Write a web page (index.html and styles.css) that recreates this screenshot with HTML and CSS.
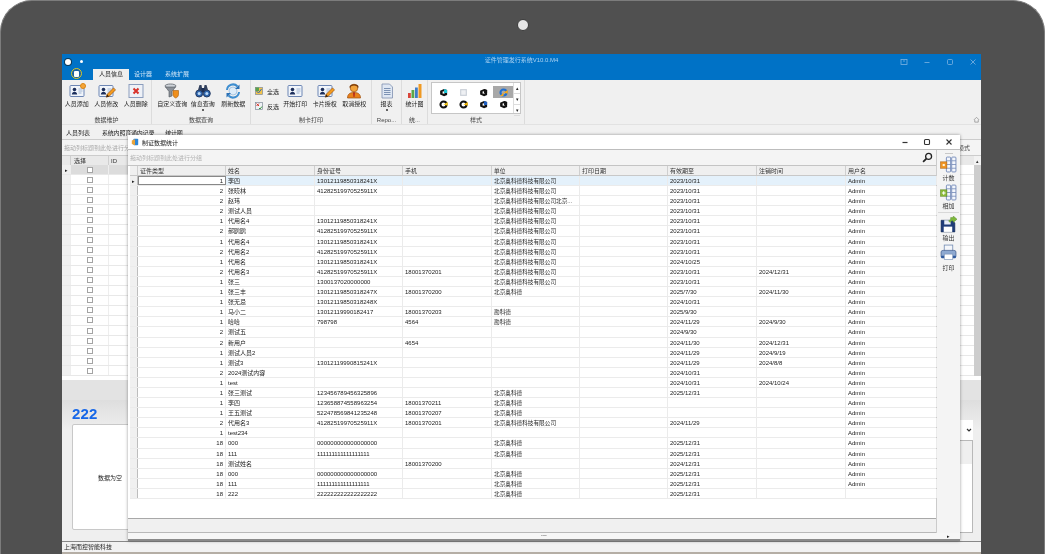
FILE: index.html
```html
<!DOCTYPE html>
<html lang="zh-CN">
<head>
<meta charset="utf-8">
<title>证件管理发行系统</title>
<link rel="stylesheet" href="styles.css">
</head>
<body>
<svg class="defs" width="0" height="0" aria-hidden="true">
  <defs>
    <symbol id="card" viewBox="0 0 16 16">
      <rect x="1" y="2.500" width="14" height="11" rx="1" fill="#f1f5fb" stroke="#6d86b4" stroke-width="1"/>
      <circle cx="5.500" cy="6.500" r="1.800" fill="#1d2f5c"/>
      <path d="M2.800 11.500c.2-2 1.300-2.800 2.700-2.800s2.500.8 2.700 2.800z" fill="#1d2f5c"/>
      <path d="M9.500 6h4M9.500 8h4M9.500 10h3" stroke="#8ea3c8" stroke-width=".8"/>
    </symbol>
    <symbol id="pencil" viewBox="0 0 16 16">
      <path d="M4 15l1-3.500 8-8 2.500 2.500-8 8z" fill="#f39a1f" stroke="#7a3d0c" stroke-width=".6"/>
      <path d="M4 15l1-3.500 2.500 2.500z" fill="#3a2410"/>
    </symbol>
    <symbol id="funnel" viewBox="0 0 16 16">
      <ellipse cx="6.500" cy="3" rx="5.500" ry="2" fill="#cfd4da" stroke="#5c626a" stroke-width=".8"/>
      <path d="M1.500 4l3.500 4.500V14l3-1V8.500L11.500 4z" fill="#8a9098" stroke="#4f555c" stroke-width=".6"/>
      <path d="M9 7.500h5.500v4c0 2-1.500 3-2.750 3.500C10.500 14.500 9 13.500 9 11.500z" fill="#ef8f1c" stroke="#a85a0a" stroke-width=".6"/>
    </symbol>
    <symbol id="binoculars" viewBox="0 0 16 16">
      <circle cx="4.200" cy="10.500" r="3.500" fill="#2f66ad" stroke="#1c2f55" stroke-width=".9"/>
      <circle cx="11.800" cy="10.500" r="3.500" fill="#2f66ad" stroke="#1c2f55" stroke-width=".9"/>
      <circle cx="4.200" cy="10.500" r="1.500" fill="#bcd8f5"/>
      <circle cx="11.800" cy="10.500" r="1.500" fill="#bcd8f5"/>
      <path d="M3 7l1.500-5h2L7.500 8M13 7l-1.500-5h-2L8.500 8" fill="#33415e"/>
      <rect x="6.500" y="5" width="3" height="4" fill="#1c2f55"/>
    </symbol>
    <symbol id="refresh" viewBox="0 0 16 16">
      <circle cx="8" cy="8" r="4" fill="#dcecf9" stroke="#8fb4d8" stroke-width=".7"/>
      <path d="M2 7A6 6 0 0 1 12.500 3.500" fill="none" stroke="#3e8ed0" stroke-width="2"/>
      <path d="M14 9A6 6 0 0 1 3.500 12.500" fill="none" stroke="#3e8ed0" stroke-width="2"/>
      <path d="M14.500 1.500v4.500h-4.500zM1.500 14.500V10h4.500z" fill="#2a70b5"/>
    </symbol>
    <symbol id="selall" viewBox="0 0 8 8">
      <rect x=".5" y=".5" width="7" height="7" fill="#f3c34b" stroke="#7f8b99" stroke-width=".7"/>
      <rect x=".5" y=".5" width="3.500" height="3.500" fill="#59a14f"/>
      <path d="M1.500 4l2 2 3-4" fill="none" stroke="#2c6bb3" stroke-width="1"/>
    </symbol>
    <symbol id="selinv" viewBox="0 0 8 8">
      <rect x=".5" y=".5" width="7" height="7" fill="#eef1f5" stroke="#7f8b99" stroke-width=".7"/>
      <path d="M1.500 1.500l2.500 2.500M4 1.500L1.500 4" stroke="#d8352a" stroke-width="1"/>
      <path d="M4 6l1 1 2-2.500" fill="none" stroke="#3c9a3c" stroke-width="1"/>
    </symbol>
    <symbol id="agent" viewBox="0 0 16 16">
      <circle cx="8" cy="5" r="3.800" fill="#f2a33a" stroke="#9c4f0c" stroke-width=".7"/>
      <path d="M4 4.500C4 1 12 1 12 4.500" fill="none" stroke="#7a3a0a" stroke-width="1.300"/>
      <path d="M1.500 15c0-4 2.500-5.500 6.500-5.500s6.500 1.500 6.500 5.500z" fill="#e8801c" stroke="#9c4f0c" stroke-width=".7"/>
      <path d="M7 9.500h2L8.500 14h-1z" fill="#b3261e"/>
    </symbol>
    <symbol id="report" viewBox="0 0 16 16">
      <path d="M3 1h7.500L13.500 4v11H3z" fill="#dfe7f3" stroke="#7d8fae" stroke-width=".8"/>
      <path d="M5 5.500h6.500M5 7.500h6.500M5 9.500h6.500M5 11.500h6.500" stroke="#7188ad" stroke-width=".9"/>
    </symbol>
    <symbol id="chart" viewBox="0 0 16 16">
      <rect x="1" y="10" width="2.800" height="5" fill="#d9453a"/>
      <rect x="4.500" y="7" width="2.800" height="8" fill="#5ba84a"/>
      <rect x="8" y="4.500" width="2.800" height="10.500" fill="#3f7dc9"/>
      <rect x="11.500" y="1" width="3" height="14" fill="#ef9a24"/>
    </symbol>
    <symbol id="colcount" viewBox="0 0 16 16">
      <rect x="6" y="1" width="4" height="14" rx=".8" fill="#f3f6fc" stroke="#6a82b4" stroke-width=".8"/>
      <rect x="11" y="1" width="4" height="14" rx=".8" fill="#f3f6fc" stroke="#6a82b4" stroke-width=".8"/>
      <path d="M6 4.500h4M6 8h4M6 11.500h4M11 4.500h4M11 8h4M11 11.500h4" stroke="#6a82b4" stroke-width=".7"/>
      <rect x=".5" y="5.500" width="6" height="6" fill="#ef9322" stroke="#a55e10" stroke-width=".5"/>
      <rect x="2.500" y="7.500" width="2" height="2" fill="#fff3d6"/>
    </symbol>
    <symbol id="coladd" viewBox="0 0 16 16">
      <rect x="6" y="1" width="4" height="14" rx=".8" fill="#f3f6fc" stroke="#6a82b4" stroke-width=".8"/>
      <rect x="11" y="1" width="4" height="14" rx=".8" fill="#f3f6fc" stroke="#6a82b4" stroke-width=".8"/>
      <path d="M6 4.500h4M6 8h4M6 11.500h4M11 4.500h4M11 8h4M11 11.500h4" stroke="#6a82b4" stroke-width=".7"/>
      <rect x=".5" y="5.500" width="6" height="6" fill="#8bbb3a" stroke="#55801a" stroke-width=".5"/>
      <path d="M3.500 6.800v3.400M1.800 8.500h3.400" stroke="#fff" stroke-width="1"/>
    </symbol>
    <symbol id="save" viewBox="0 0 16 16">
      <path d="M1 4h10.500L14 6.500V15H1z" fill="#1f3c78" stroke="#10234c" stroke-width=".5"/>
      <rect x="4" y="4" width="6" height="4" fill="#e9eef7"/>
      <rect x="3.500" y="10" width="8" height="5" fill="#fff"/>
      <path d="M8 4.500l2-1V1.500h2.500V0L16 3l-3.500 3V4.500H11L9.500 6z" fill="#7db93a" stroke="#4f8120" stroke-width=".4"/>
    </symbol>
    <symbol id="printer" viewBox="0 0 16 16">
      <rect x="4" y="1" width="8" height="6" fill="#f4f6fa" stroke="#7890b5" stroke-width=".8"/>
      <path d="M1 7.500Q1 6 3 6h10q2 0 2 1.500V12H1z" fill="#8ea9d1" stroke="#3f5c8d" stroke-width=".7"/>
      <rect x="1" y="11" width="14" height="2.500" rx="1" fill="#2f5a9e"/>
      <rect x="4" y="9.500" width="8" height="5" fill="#fff" stroke="#7890b5" stroke-width=".6"/>
    </symbol>
    <symbol id="tile" viewBox="0 0 8 8">
      <path d="M1 2.500L4.500.8 7.200 1.800V6.200L4.500 7.300 1 5.800z" fill="#111"/>
      <path d="M3.200 3h1.800v2H3.200z" fill="#fff"/>
      <path d="M4.500 .8L7.200 1.800V4.500H4.500z" fill="currentColor"/>
    </symbol>
    <symbol id="ring" viewBox="0 0 8 8">
      <circle cx="4" cy="4" r="2.700" fill="none" stroke="#111" stroke-width="1.800"/>
      <path d="M4 4L7.800 1.800V5.200z" fill="currentColor"/>
    </symbol>
    <symbol id="ringblue" viewBox="0 0 8 8">
      <circle cx="4" cy="4" r="2.700" fill="none" stroke="#1f6fd0" stroke-width="1.800"/>
      <path d="M4 4L7.800 1.800V5.200zM4 4L1 7h3z" fill="currentColor"/>
    </symbol>
    <symbol id="pale" viewBox="0 0 8 8">
      <rect x="1.500" y="1.500" width="5" height="5" fill="#eef0f3" stroke="#c9ced6" stroke-width="1"/>
    </symbol>
  </defs>
</svg>

<div class="frame">
  <div class="camera"></div>
  <div class="app">
    <header class="titlebar">
      <div class="title-top">
        <span class="qat"><i class="qat-big"></i><i class="qat-small"></i></span>
        <span class="app-title">证件管理发行系统V10.0.M4</span>
        <span class="win-btns">
          <svg class="wb" viewBox="0 0 8 8"><rect x="1" y="1.500" width="6" height="5" fill="none" stroke="#7eb4e2" stroke-width=".8"/><path d="M4 2v2" stroke="#7eb4e2" stroke-width=".8"/></svg>
          <svg class="wb" viewBox="0 0 8 8"><path d="M1.500 4.500h5" stroke="#7eb4e2" stroke-width=".8"/></svg>
          <svg class="wb" viewBox="0 0 8 8"><rect x="1.500" y="1.500" width="5" height="5" rx="1" fill="none" stroke="#7eb4e2" stroke-width=".8"/></svg>
          <svg class="wb" viewBox="0 0 8 8"><path d="M1.500 1.500l5 5M6.500 1.500l-5 5" stroke="#7eb4e2" stroke-width=".8"/></svg>
        </span>
      </div>
      <nav class="tabs">
        <span class="orb"><i></i></span>
        <span class="tab active">人员信息</span>
        <span class="tab t2">设计器</span>
        <span class="tab t3">系统扩展</span>
      </nav>
    </header>

    <section class="ribbon">
      <div class="group g1">
        <div class="tools">
          <div class="tool"><span class="ico"><svg><use href="#card"/></svg><i class="plus"></i></span><span>人员添加</span></div>
          <div class="tool"><span class="ico"><svg><use href="#card"/></svg><svg class="over"><use href="#pencil"/></svg></span><span>人员修改</span></div>
          <div class="tool"><span class="ico"><svg class="del" viewBox="0 0 16 16"><rect x="1" y="1.500" width="14" height="13" fill="#eef1f7" stroke="#8b9dbd"/><path d="M5.500 5.500l5 5M10.500 5.500l-5 5" stroke="#d8322a" stroke-width="2"/></svg></span><span>人员删除</span></div>
        </div>
        <div class="glabel">数据维护</div>
      </div>
      <div class="group g2">
        <div class="tools">
          <div class="tool"><span class="ico"><svg><use href="#funnel"/></svg></span><span>自定义查询</span></div>
          <div class="tool"><span class="ico"><svg><use href="#binoculars"/></svg></span><span>信息查询</span><i class="drop"></i></div>
          <div class="tool"><span class="ico"><svg><use href="#refresh"/></svg></span><span>刷新数据</span></div>
        </div>
        <div class="glabel">数据查询</div>
      </div>
      <div class="group g3">
        <div class="tools">
          <div class="smalls">
            <div class="small"><svg><use href="#selall"/></svg><span>全选</span></div>
            <div class="small"><svg><use href="#selinv"/></svg><span>反选</span></div>
          </div>
          <div class="tool"><span class="ico"><svg><use href="#card"/></svg></span><span>开始打印</span></div>
          <div class="tool"><span class="ico"><svg><use href="#card"/></svg><svg class="over"><use href="#pencil"/></svg></span><span>卡片授权</span></div>
          <div class="tool"><span class="ico"><svg><use href="#agent"/></svg></span><span>取消授权</span></div>
        </div>
        <div class="glabel">制卡打印</div>
      </div>
      <div class="group g4">
        <div class="tools">
          <div class="tool"><span class="ico"><svg><use href="#report"/></svg></span><span>报表</span><i class="drop"></i></div>
        </div>
        <div class="glabel">Repo...</div>
      </div>
      <div class="group g5">
        <div class="tools">
          <div class="tool"><span class="ico"><svg><use href="#chart"/></svg></span><span>统计图</span></div>
        </div>
        <div class="glabel">统...</div>
      </div>
      <div class="group g6">
        <div class="tools">
          <div class="gallery">
            <div class="swatches">
              <span class="sw"><svg class="c-cyan"><use href="#tile"/></svg></span>
              <span class="sw"><svg><use href="#pale"/></svg></span>
              <span class="sw"><svg class="c-black"><use href="#tile"/></svg></span>
              <span class="sw sel"><svg class="c-orange"><use href="#ringblue"/></svg></span>
              <span class="sw"><svg class="c-yellow"><use href="#ring"/></svg></span>
              <span class="sw"><svg class="c-gold"><use href="#ring"/></svg></span>
              <span class="sw"><svg class="c-navy"><use href="#tile"/></svg></span>
              <span class="sw"><svg class="c-black"><use href="#tile"/></svg></span>
            </div>
            <div class="gscroll"><b>▴</b><b>▾</b><b>▾</b></div>
          </div>
        </div>
        <div class="glabel">样式</div>
      </div>
      <svg class="collapse" viewBox="0 0 8 8"><path d="M1 4.500L4 1.500l3 3M2 4.500V7h4V4.500" fill="none" stroke="#888" stroke-width=".8"/></svg>
    </section>

    <main class="work">
      <div class="doc-tabs">
        <span class="doc-tab active">人员列表</span>
        <span class="doc-tab">系统内照育通内记录</span>
        <span class="doc-tab">统计图</span>
      </div>
      <div class="groupbar"><span>拖动列标题到此处进行分组</span><span class="mode">模式</span></div>
      <div class="bg-head"><span class="bi"></span><span class="bc">选择</span><span class="bid">ID</span><span class="brest"></span><span class="bscroll">▴</span></div>
      <div class="bg-rows">
        <div class="bg-row current"><i class="mark">▸</i><span class="bc"><i class="check"></i></span><span class="bid"></span></div>
        <div class="bg-row"><i class="mark"></i><span class="bc"><i class="check"></i></span><span class="bid"></span></div>
        <div class="bg-row"><i class="mark"></i><span class="bc"><i class="check"></i></span><span class="bid"></span></div>
        <div class="bg-row"><i class="mark"></i><span class="bc"><i class="check"></i></span><span class="bid"></span></div>
        <div class="bg-row"><i class="mark"></i><span class="bc"><i class="check"></i></span><span class="bid"></span></div>
        <div class="bg-row"><i class="mark"></i><span class="bc"><i class="check"></i></span><span class="bid"></span></div>
        <div class="bg-row"><i class="mark"></i><span class="bc"><i class="check"></i></span><span class="bid"></span></div>
        <div class="bg-row"><i class="mark"></i><span class="bc"><i class="check"></i></span><span class="bid"></span></div>
        <div class="bg-row"><i class="mark"></i><span class="bc"><i class="check"></i></span><span class="bid"></span></div>
        <div class="bg-row"><i class="mark"></i><span class="bc"><i class="check"></i></span><span class="bid"></span></div>
        <div class="bg-row"><i class="mark"></i><span class="bc"><i class="check"></i></span><span class="bid"></span></div>
        <div class="bg-row"><i class="mark"></i><span class="bc"><i class="check"></i></span><span class="bid"></span></div>
        <div class="bg-row"><i class="mark"></i><span class="bc"><i class="check"></i></span><span class="bid"></span></div>
        <div class="bg-row"><i class="mark"></i><span class="bc"><i class="check"></i></span><span class="bid"></span></div>
        <div class="bg-row"><i class="mark"></i><span class="bc"><i class="check"></i></span><span class="bid"></span></div>
        <div class="bg-row"><i class="mark"></i><span class="bc"><i class="check"></i></span><span class="bid"></span></div>
        <div class="bg-row"><i class="mark"></i><span class="bc"><i class="check"></i></span><span class="bid"></span></div>
        <div class="bg-row"><i class="mark"></i><span class="bc"><i class="check"></i></span><span class="bid"></span></div>
        <div class="bg-row"><i class="mark"></i><span class="bc"><i class="check"></i></span><span class="bid"></span></div>
        <div class="bg-row"><i class="mark"></i><span class="bc"><i class="check"></i></span><span class="bid"></span></div>
        <div class="bg-row"><i class="mark"></i><span class="bc"><i class="check"></i></span><span class="bid"></span></div>
      </div>
      <div class="bg-foot"></div>
      <div class="lower">
        <div class="lower-left">
          <h2 class="big">222</h2>
          <div class="empty-box"><span>数据为空</span></div>
        </div>
        <div class="lower-right">
          <div class="combo"><svg viewBox="0 0 8 8"><path d="M2 3l2 2 2-2" fill="none" stroke="#333" stroke-width="1.200"/></svg></div>
          <div class="chart-box"><div class="chart-head"></div></div>
        </div>
      </div>
    </main>

    <section class="dialog">
      <div class="dlg-title">
        <svg class="dlg-icon" viewBox="0 0 10 10"><rect x="3" y="1" width="6" height="8" rx="1" fill="#2f86d6"/><path d="M1 3l4-1.500V9L1 7.500z" fill="#e9a33a"/></svg>
        <span class="dlg-text">制证数据统计</span>
        <span class="dlg-btns">
          <svg viewBox="0 0 8 8"><path d="M1.500 4.500h5" stroke="#333" stroke-width="1.200"/></svg>
          <svg viewBox="0 0 8 8"><rect x="1.500" y="1.500" width="5" height="5" rx="1" fill="none" stroke="#333" stroke-width="1.100"/></svg>
          <svg viewBox="0 0 8 8"><path d="M1.500 1.500l5 5M6.500 1.500l-5 5" stroke="#333" stroke-width="1.100"/></svg>
        </span>
      </div>
      <div class="dlg-body">
        <div class="dlg-main">
          <div class="dlg-group">
            <span>拖动列标题到此处进行分组</span>
            <svg class="lens" viewBox="0 0 10 10"><circle cx="6" cy="4" r="2.700" fill="none" stroke="#222" stroke-width="1.200"/><path d="M4 6L1 9" stroke="#222" stroke-width="1.600"/></svg>
          </div>
          <div class="grid">
            <div class="row head"><span class="ind"></span><span>证件类型</span><span>姓名</span><span>身份证号</span><span>手机</span><span>单位</span><span>打印日期</span><span>有效期至</span><span>注销时间</span><span>用户名</span></div>
            <div class="row first"><span class="ind">▸</span><span class="n focus">1</span><span>李四</span><span>13012119850318241X</span><span></span><span>北京奥科德科技有限公司</span><span></span><span>2023/10/31</span><span></span><span>Admin</span></div>
            <div class="row"><span class="ind"></span><span class="n">2</span><span>张晓林</span><span>41282519970525911X</span><span></span><span>北京奥科德科技有限公司</span><span></span><span>2023/10/31</span><span></span><span>Admin</span></div>
            <div class="row"><span class="ind"></span><span class="n">2</span><span>赵玮</span><span></span><span></span><span>北京奥科德科技有限公司北京...</span><span></span><span>2023/10/31</span><span></span><span>Admin</span></div>
            <div class="row"><span class="ind"></span><span class="n">2</span><span>测试人员</span><span></span><span></span><span>北京奥科德科技有限公司</span><span></span><span>2023/10/31</span><span></span><span>Admin</span></div>
            <div class="row"><span class="ind"></span><span class="n">1</span><span>代用名4</span><span>13012119850318241X</span><span></span><span>北京奥科德科技有限公司</span><span></span><span>2023/10/31</span><span></span><span>Admin</span></div>
            <div class="row"><span class="ind"></span><span class="n">2</span><span>郝鸥鸥</span><span>41282519970525911X</span><span></span><span>北京奥科德科技有限公司</span><span></span><span>2023/10/31</span><span></span><span>Admin</span></div>
            <div class="row"><span class="ind"></span><span class="n">1</span><span>代用名4</span><span>13012119850318241X</span><span></span><span>北京奥科德科技有限公司</span><span></span><span>2023/10/31</span><span></span><span>Admin</span></div>
            <div class="row"><span class="ind"></span><span class="n">2</span><span>代用名2</span><span>41282519970525911X</span><span></span><span>北京奥科德科技有限公司</span><span></span><span>2023/10/31</span><span></span><span>Admin</span></div>
            <div class="row"><span class="ind"></span><span class="n">1</span><span>代用名</span><span>13012119850318241X</span><span></span><span>北京奥科德科技有限公司</span><span></span><span>2024/10/25</span><span></span><span>Admin</span></div>
            <div class="row"><span class="ind"></span><span class="n">2</span><span>代用名3</span><span>41282519970525911X</span><span>18001370201</span><span>北京奥科德科技有限公司</span><span></span><span>2023/10/31</span><span>2024/12/31</span><span>Admin</span></div>
            <div class="row"><span class="ind"></span><span class="n">1</span><span>张三</span><span>1300137020000000</span><span></span><span>北京奥科德科技有限公司</span><span></span><span>2023/10/31</span><span></span><span>Admin</span></div>
            <div class="row"><span class="ind"></span><span class="n">1</span><span>张三丰</span><span>13012119850318247X</span><span>18001370200</span><span>北京奥科德</span><span></span><span>2025/7/30</span><span>2024/11/30</span><span>Admin</span></div>
            <div class="row"><span class="ind"></span><span class="n">1</span><span>张无忌</span><span>13012119850318248X</span><span></span><span></span><span></span><span>2024/10/31</span><span></span><span>Admin</span></div>
            <div class="row"><span class="ind"></span><span class="n">1</span><span>马小二</span><span>13012119990182417</span><span>18001370203</span><span>勘科德</span><span></span><span>2025/9/30</span><span></span><span>Admin</span></div>
            <div class="row"><span class="ind"></span><span class="n">1</span><span>哈哈</span><span>798798</span><span>4564</span><span>勘科德</span><span></span><span>2024/11/29</span><span>2024/9/30</span><span>Admin</span></div>
            <div class="row"><span class="ind"></span><span class="n">2</span><span>测试五</span><span></span><span></span><span></span><span></span><span>2024/9/30</span><span></span><span>Admin</span></div>
            <div class="row"><span class="ind"></span><span class="n">2</span><span>新用户</span><span></span><span>4654</span><span></span><span></span><span>2024/11/30</span><span>2024/12/31</span><span>Admin</span></div>
            <div class="row"><span class="ind"></span><span class="n">1</span><span>测试人员2</span><span></span><span></span><span></span><span></span><span>2024/11/29</span><span>2024/9/19</span><span>Admin</span></div>
            <div class="row"><span class="ind"></span><span class="n">1</span><span>测试3</span><span>13012119990815241X</span><span></span><span></span><span></span><span>2024/11/29</span><span>2024/8/8</span><span>Admin</span></div>
            <div class="row"><span class="ind"></span><span class="n">2</span><span>2024测试内容</span><span></span><span></span><span></span><span></span><span>2024/10/31</span><span></span><span>Admin</span></div>
            <div class="row"><span class="ind"></span><span class="n">1</span><span>test</span><span></span><span></span><span></span><span></span><span>2024/10/31</span><span>2024/10/24</span><span>Admin</span></div>
            <div class="row"><span class="ind"></span><span class="n">1</span><span>张三测试</span><span>123456789456325896</span><span></span><span>北京奥科德</span><span></span><span>2025/12/31</span><span></span><span>Admin</span></div>
            <div class="row"><span class="ind"></span><span class="n">1</span><span>李四</span><span>123658874558963254</span><span>18001370211</span><span>北京奥科德</span><span></span><span></span><span></span><span>Admin</span></div>
            <div class="row"><span class="ind"></span><span class="n">1</span><span>王五测试</span><span>522478569841235248</span><span>18001370207</span><span>北京奥科德</span><span></span><span></span><span></span><span>Admin</span></div>
            <div class="row"><span class="ind"></span><span class="n">2</span><span>代用名3</span><span>41282519970525911X</span><span>18001370201</span><span>北京奥科德科技有限公司</span><span></span><span>2024/11/29</span><span></span><span>Admin</span></div>
            <div class="row"><span class="ind"></span><span class="n">1</span><span>test234</span><span></span><span></span><span></span><span></span><span></span><span></span><span>Admin</span></div>
            <div class="row"><span class="ind"></span><span class="n">18</span><span>000</span><span>000000000000000000</span><span></span><span>北京奥科德</span><span></span><span>2025/12/31</span><span></span><span>Admin</span></div>
            <div class="row"><span class="ind"></span><span class="n">18</span><span>111</span><span>111111111111111111</span><span></span><span>北京奥科德</span><span></span><span>2025/12/31</span><span></span><span>Admin</span></div>
            <div class="row"><span class="ind"></span><span class="n">18</span><span>测试姓名</span><span></span><span>18001370200</span><span></span><span></span><span>2024/12/31</span><span></span><span>Admin</span></div>
            <div class="row"><span class="ind"></span><span class="n">18</span><span>000</span><span>000000000000000000</span><span></span><span>北京奥科德</span><span></span><span>2025/12/31</span><span></span><span>Admin</span></div>
            <div class="row"><span class="ind"></span><span class="n">18</span><span>111</span><span>111111111111111111</span><span></span><span>北京奥科德</span><span></span><span>2025/12/31</span><span></span><span>Admin</span></div>
            <div class="row"><span class="ind"></span><span class="n">18</span><span>222</span><span>222222222222222222</span><span></span><span>北京奥科德</span><span></span><span>2025/12/31</span><span></span><span></span></div>
          </div>
          <div class="summary"></div>
        </div>
        <aside class="side">
          <i class="side-grip"></i>
          <div class="side-btn"><svg><use href="#colcount"/></svg><span>计数</span></div>
          <div class="side-btn"><svg><use href="#coladd"/></svg><span>相加</span></div>
          <i class="side-sep"></i>
          <div class="side-btn"><svg><use href="#save"/></svg><span>输出</span></div>
          <div class="side-btn last"><svg><use href="#printer"/></svg><span>打印</span></div>
        </aside>
      </div>
      <div class="dlg-foot"><span class="grip">•••••</span><span class="more">▸</span></div>
    </section>

    <footer class="status">上海而控智能科技</footer>
  </div>
  <div class="base"></div>
</div>
</body>
</html>
```

FILE: styles.css
```css
* { box-sizing: border-box; }
html, body { margin: 0; padding: 0; background: #fff; overflow: hidden; }
body { font-family: "Liberation Sans", "Noto Sans CJK SC", sans-serif; font-size: 6px; color: #222; }
.defs { position: absolute; }
i { font-style: normal; display: block; }

.frame {
  width: 1045px; height: 554px; background: #505050;
  border: 1px solid #7c7c7c; border-bottom: 0;
  border-radius: 32px 32px 0 0;
  display: flex; flex-direction: column; overflow: hidden;
}
.camera {
  width: 12px; height: 12px; border-radius: 50%;
  background: #e6e6e6; border: 1px solid #3a3a3a;
  margin: 18px 0 23px 515px; flex: none;
  transform: translateX(1px);
}
.app {
  position: relative; width: 919px; height: 498px; margin-left: 61px; flex: none;
  background: #efefef; display: flex; flex-direction: column; filter: blur(.35px);
}
.base { width: 919px; height: 2px; margin-left: 61px; flex: none; background: #b5aea5; }

/* title */
.titlebar { height: 26px; background: #0072c6; flex: none; display: flex; flex-direction: column; }
.title-top { height: 15px; display: flex; align-items: center; position: relative; }
.qat { display: flex; align-items: center; gap: 9px; padding-left: 3px; }
.qat-big { width: 6px; height: 6px; background: #fff; border-radius: 50%; box-shadow: 0 0 0 1px #0a3a5a; }
.qat-small { width: 3px; height: 3px; background: #fff; border-radius: 50%; }
.app-title { position: absolute; left: 0; right: 0; top: 2px; text-align: center; color: #a9d2f2; line-height: 9px; }
.win-btns { margin-left: auto; display: flex; gap: 15px; padding-right: 4px; }
.wb { width: 8px; height: 8px; }
.tabs { height: 11px; display: flex; align-items: flex-end; position: relative; padding-left: 31px; color: #cfe5f7; }
.orb { position: absolute; left: 9px; top: -1px; width: 11px; height: 11px; border-radius: 50%; border: 1px solid #d8c92a; background: #1c5fa0; display: flex; align-items: center; justify-content: center; }
.orb i { width: 5px; height: 6px; background: #fff; border-radius: 1px; }
.tab { height: 11px; line-height: 11px; text-align: center; }
.tab.active { width: 36px; background: #efefef; color: #222; }
.t2 { width: 28px; }
.t3 { margin-left: 5px; width: 30px; }

/* ribbon */
.ribbon { height: 45px; flex: none; display: flex; background: #f0f0f0; border-bottom: 1px solid #e2e2e2; position: relative; }
.group { display: flex; flex-direction: column; border-right: 1px solid #dcdcdc; }
.g1 { width: 90px; } .g2 { width: 99px; } .g3 { width: 121px; } .g4 { width: 30px; } .g5 { width: 26px; } .g6 { width: 97px; }
.g2 .tools { padding-left: 5px; }
.tools { height: 36px; display: flex; flex: none; }
.glabel { flex: 1; text-align: center; line-height: 8px; color: #444; }
.tool { flex: 1; display: flex; flex-direction: column; align-items: center; padding-top: 3px; line-height: 8px; white-space: nowrap; min-width: 0; }
.g1 .tool { flex: none; width: 29.500px; }
.g2 .tool { flex: none; width: 30.500px; }
.g3 .tool { flex: none; width: 29.500px; }
.ico { width: 16px; height: 16px; position: relative; margin-bottom: 1px; display: block; }
.ico svg { width: 16px; height: 16px; display: block; }
.ico .over { position: absolute; left: 5px; top: 2px; width: 13px; height: 13px; }
.plus { position: absolute; right: -1px; top: 0; width: 6px; height: 6px; border-radius: 50%; background: #f5a63a; border: 1px solid #d98512; }
.drop { width: 2px; height: 2px; background: #333; border-radius: 50%; margin-top: 1px; }
.smalls { width: 29.500px; flex: none; display: flex; flex-direction: column; gap: 7px; padding: 7px 0 0 4px; }
.small { display: flex; align-items: center; gap: 4px; height: 8px; }
.small svg { width: 8px; height: 8px; }
.gallery { margin: 2px 0 0 3px; width: 90px; height: 32px; background: #fff; border: 1px solid #c6c6c6; display: flex; flex: none; }
.swatches { flex: 1; display: grid; grid-template-columns: repeat(4, 20px); grid-auto-rows: 12px; align-content: center; padding-left: 1px; }
.sw { display: flex; align-items: center; justify-content: center; }
.sw svg { width: 9px; height: 9px; }
.sw.sel { background: #a8a8a8; }
.c-cyan { color: #19c6d6; } .c-black { color: #111; } .c-orange { color: #f2a71c; }
.c-yellow { color: #f4c81c; } .c-gold { color: #f2b705; } .c-navy { color: #1e5fc4; }
.gscroll { width: 7px; display: flex; flex-direction: column; border-left: 1px solid #ddd; }
.gscroll b { flex: 1; font-weight: 400; font-size: 5px; line-height: 10px; text-align: center; color: #222; border-bottom: 1px solid #ddd; }
.collapse { position: absolute; right: 1px; bottom: 1px; width: 7px; height: 7px; }

/* workspace behind the dialog */
.work { flex: 1; display: flex; flex-direction: column; min-height: 0; }
.doc-tabs { height: 15px; display: flex; align-items: center; gap: 9px; padding: 2px 0 0 3px; border-bottom: 1px solid #ccc; background: #f1f1f1; flex: none; }
.doc-tab { padding: 0 1px; line-height: 10px; }
.doc-tab + .doc-tab { letter-spacing: -.2px; }
.doc-tab.active { padding-right: 2px; }
.groupbar { height: 15px; display: flex; align-items: center; justify-content: space-between; padding: 0 11px 0 2px; color: #aaa; background: #f4f4f4; flex: none; }
.mode { color: #444; }
.bg-head { height: 10px; display: flex; line-height: 10px; background: #e9e9e9; border-top: 1px solid #ccc; flex: none; color: #333; }
.bi { width: 8px; }
.bc { width: 38px; border-left: 1px solid #cfcfcf; padding-left: 3px; flex: none; }
.bid { width: 20px; border-left: 1px solid #cfcfcf; padding-left: 2px; flex: none; }
.brest { flex: 1; }
.bscroll { width: 7px; font-size: 5px; text-align: center; background: #f2f2f2; }
.bg-rows { flex: none; background: #fff; border-right: 7px solid #cdcdcd; }
.bg-row { height: 10.070px; display: flex; align-items: center; border-bottom: 1px solid #e8e8e8; }
.mark { width: 8px; font-size: 5px; text-align: center; background: #f0f0f0; align-self: stretch; line-height: 10px; }
.bg-row .bc { padding: 0; display: flex; justify-content: center; align-self: stretch; align-items: center; border-color: #eee; }
.bg-row .bid { align-self: stretch; border-color: #eee; }
.bg-row.current .bc, .bg-row.current .bid { background: #dcdcdc; }
.check { width: 6px; height: 6px; border: 1px solid #a4a4a4; background: #fff; }
.bg-foot { height: 24px; flex: none; background: #e3e3e3; border-top: 4px solid #fff; }
.lower { flex: 1; min-height: 0; display: flex; justify-content: space-between; padding: 5px 8px 11px 10px; background: linear-gradient(#dedede, #efefef 22%); }
.lower-left { width: 160px; display: flex; flex-direction: column; }
.big { margin: 0; font-size: 15px; font-weight: 700; line-height: 18px; color: #1667e8; letter-spacing: .2px; font-family: "Liberation Sans", sans-serif; }
.empty-box { flex: 1; margin-top: 1px; background: #fff; border: 1px solid #c8c8c8; border-radius: 2px; display: flex; align-items: center; padding-left: 25px; }
.lower-right { width: 260px; display: flex; flex-direction: column; margin-top: 15px; margin-bottom: -3px; }
.combo { height: 20px; background: #fff; display: flex; justify-content: flex-end; align-items: center; flex: none; }
.combo svg { width: 8px; height: 8px; }
.chart-box { flex: 1; background: #fff; border: 1px solid #b8b8b8; }
.chart-head { height: 23px; background: #efefef; }

/* dialog */
.dialog {
  position: absolute; left: 66px; top: 81px; width: 832px; height: 406px;
  background: #f4f4f4; border-bottom: 2px solid #8a8a8a;
  box-shadow: 0 0 3px rgba(0, 0, 0, .4); display: flex; flex-direction: column;
}
.dlg-title { height: 15px; flex: none; background: #fff; display: flex; align-items: center; padding-left: 3px; border-bottom: 1px solid #bdbdbd; }
.dlg-icon { width: 8px; height: 8px; }
.dlg-text { margin-left: 3px; }
.dlg-btns { margin-left: auto; display: flex; gap: 14px; padding-right: 7px; }
.dlg-btns svg { width: 8px; height: 8px; }
.dlg-body { flex: 1; display: flex; min-height: 0; }
.dlg-main { width: 809px; flex: none; display: flex; flex-direction: column; padding-left: 2px; border-right: 1px solid #cbcbcb; background: #fff; }
.dlg-group { height: 16px; flex: none; background: #f4f4f4; color: #b2b2b2; display: flex; align-items: center; justify-content: space-between; padding: 0 3px 0 2px; border-bottom: 1px solid #c4c4c4; margin-left: -2px; }
.lens { width: 11px; height: 11px; }
.grid { flex: 1; min-height: 0; background: #fff; }
.row { display: grid; grid-template-columns: 8px 88px 89px 88px 89px 88px 88px 89px 89px 91px; height: 10.100px; line-height: 10px; border-bottom: 1px solid #ebebeb; white-space: nowrap; }
.row > span { padding: 0 2px; border-right: 1px solid #ebebeb; overflow: hidden; min-width: 0; }
.row > span:nth-child(6) { font-size: 5.650px; }
.row .ind { background: #f0f0f0; font-size: 5px; padding: 0; text-align: center; border-right: 1px solid #bdbdbd; }
.row .n { text-align: right; }
.row.head { background: #efefef; height: 10px; color: #333; border-bottom: 1px solid #c8c8c8; }
.row.head > span { border-right-color: #cfcfcf; }
.row.first > span { background: #e4f1fb; }
.row.first > .ind { background: #f0f0f0; }
.row.first > .focus { background: #fff; border: 1px solid #888; line-height: 8px; }
.summary { height: 15px; flex: none; background: #f0f0f0; border-top: 1px solid #a8a8a8; border-bottom: 1px solid #b8b8b8; margin-left: -2px; }
.side { width: 23px; flex: none; display: flex; flex-direction: column; align-items: center; background: #f4f4f4; padding-top: 3px; }
.side-grip { width: 8px; height: 1px; background: #c8c8c8; flex: none; margin-bottom: 1px; }
.side-btn { display: flex; flex-direction: column; align-items: center; line-height: 8px; height: 28px; flex: none; color: #333; padding-top: 1px; }
.side-btn svg { width: 17px; height: 17px; flex: none; margin-bottom: 1px; }
.side-btn.last svg { margin-bottom: 3px; }
.side-sep { width: 21px; height: 1px; background: #d8d8d8; margin: 1px 0 2px; flex: none; }
.dlg-foot { height: 6px; flex: none; display: flex; position: relative; justify-content: center; align-items: center; background: #f6f6f6; }
.grip { font-size: 3px; line-height: 6px; color: #666; }
.more { position: absolute; right: 10px; top: 0; font-size: 5px; line-height: 6px; }

.status { height: 11px; flex: none; line-height: 11px; background: #f2f2f2; border-top: 1px solid #888; padding-left: 2px; color: #222; }
```
